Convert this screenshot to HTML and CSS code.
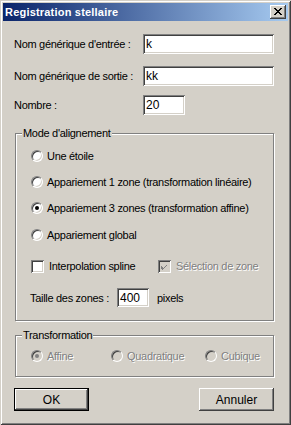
FILE: index.html
```html
<!DOCTYPE html>
<html lang="fr">
<head>
<meta charset="utf-8">
<title>Registration stellaire</title>
<link rel="stylesheet" href="styles.css">
</head>
<body>
<div class="window">
  <div class="titlebar">
    <span class="title">Registration stellaire</span>
    <span class="close-btn"><svg width="8" height="7" viewBox="0 0 8 7"><path d="M0 0h2v1h1v1h2v-1h1v-1h2v1h-1v1h-1v1h-1v1h1v1h1v1h1v1h-2v-1h-1v-1h-2v1h-1v1h-2v-1h1v-1h1v-1h1v-1h-1v-1h-1v-1h-1z" fill="#000"/></svg></span>
  </div>
  <div class="content">
    <div class="field-row row1">
      <span class="label w-main">Nom générique d'entrée :</span>
      <span class="input input-wide">k</span>
    </div>
    <div class="field-row row2">
      <span class="label w-main">Nom générique de sortie :</span>
      <span class="input input-wide">kk</span>
    </div>
    <div class="field-row row3">
      <span class="label w-main">Nombre :</span>
      <span class="input input-num">20</span>
    </div>

    <div class="group group-mode">
      <span class="group-title">Mode d'alignement</span>
      <div class="opt"><span class="radio"></span><span class="opt-text">Une étoile</span></div>
      <div class="opt gap12"><span class="radio"></span><span class="opt-text">Appariement 1 zone (transformation linéaire)</span></div>
      <div class="opt gap12"><span class="radio checked"></span><span class="opt-text">Appariement 3 zones (transformation affine)</span></div>
      <div class="opt gap13"><span class="radio"></span><span class="opt-text">Appariement global</span></div>
      <div class="opt gap17">
        <span class="check-cell"><span class="checkbox"></span><span class="check-text">Interpolation spline</span></span>
        <span class="check-cell"><span class="checkbox disabled"><svg width="7" height="7" viewBox="0 0 7 7"><path d="M6 0v3h-1v1h-1v1h-1v1h-1v1h-1v-1h-1v-3h1v1h1v1h1v-1h1v-1h1v-1h1z" fill="#808080"/></svg></span><span class="check-text disabled-text">Sélection de zone</span></span>
      </div>
      <div class="size-row">
        <span class="label size-label">Taille des zones :</span>
        <span class="input input-size">400</span>
        <span class="label unit">pixels</span>
      </div>
    </div>

    <div class="group group-trans">
      <span class="group-title">Transformation</span>
      <div class="opt trans-row">
        <span class="trans-cell c1"><span class="radio disabled checked"></span><span class="opt-text disabled-text">Affine</span></span>
        <span class="trans-cell c2"><span class="radio disabled"></span><span class="opt-text disabled-text">Quadratique</span></span>
        <span class="trans-cell c3"><span class="radio disabled"></span><span class="opt-text disabled-text">Cubique</span></span>
      </div>
    </div>

    <div class="buttons">
      <span class="btn btn-default">OK</span>
      <span class="btn">Annuler</span>
    </div>
  </div>
</div>
</body>
</html>
```
FILE: styles.css
```css
* { box-sizing: border-box; }
html, body { margin: 0; padding: 0; background: #D4D0C8; }
body {
  font-family: "Liberation Sans", Arial, sans-serif;
  font-size: 11px;
  letter-spacing: -0.3px;
  color: #000;
}
.window {
  width: 291px;
  height: 425px;
  padding: 3px;
  background: #D4D0C8;
  box-shadow: inset 1px 1px #D4D0C8, inset -1px -1px #404040, inset 2px 2px #FFFFFF, inset -2px -2px #808080;
  display: flex;
  flex-direction: column;
}
.titlebar {
  height: 18px;
  background: linear-gradient(to right, #0A246A, #A6CAF0);
  display: flex;
  align-items: center;
  justify-content: space-between;
  padding: 0 2px 0 2px;
}
.title {
  color: #fff;
  font-weight: bold;
  font-size: 11px;
  letter-spacing: 0.2px;
}
.close-btn {
  width: 16px;
  height: 14px;
  background: #D4D0C8;
  box-shadow: inset -1px -1px #404040, inset 1px 1px #FFFFFF, inset -2px -2px #808080, inset 2px 2px #D4D0C8;
  display: flex;
  align-items: center;
  justify-content: center;
  padding-bottom: 1px;
}
.close-btn svg { display: block; }
.content {
  padding: 0 14px 0 11px;
  display: flex;
  flex-direction: column;
}
.field-row {
  display: flex;
  align-items: center;
  height: 20px;
}
.row1 { margin-top: 13px; }
.row2 { margin-top: 12px; }
.row3 { margin-top: 9px; }
.w-main { width: 129px; flex: none; }
.label { white-space: nowrap; }
.input {
  height: 20px;
  background: #fff;
  box-shadow: inset 1px 1px #808080, inset -1px -1px #FFFFFF, inset 2px 2px #404040, inset -2px -2px #D4D0C8;
  padding: 0 3px;
  display: flex;
  align-items: center;
  font-size: 12px;
  letter-spacing: 0;
}
.input-wide { width: 131px; }
.input-num { width: 42px; }

.group {
  position: relative;
  margin-left: 1px;
  width: 259px;
  border: 1px solid #808080;
  box-shadow: inset 1px 1px #FFFFFF, 1px 1px #FFFFFF;
  display: flex;
  flex-direction: column;
  padding-left: 15px;
}
.group-title {
  position: absolute;
  top: -7px;
  left: 6px;
  padding: 0 1px;
  background: #D4D0C8;
  line-height: 13px;
}
.group-mode {
  margin-top: 18px;
  padding-top: 15px;
  padding-bottom: 12px;
  height: 188px;
}
.group-trans {
  margin-top: 14px;
  padding-top: 13px;
  height: 42px;
}
.opt {
  display: flex;
  align-items: center;
  height: 14px;
}
.gap12 { margin-top: 12px; }
.gap13 { margin-top: 13px; }
.gap17 { margin-top: 17px; }
.opt-text { margin-left: 4px; white-space: nowrap; }

.radio {
  position: relative;
  flex: none;
  width: 12px;
  height: 12px;
  border-radius: 50%;
  border: 1px solid;
  border-color: #808080 #FFFFFF #FFFFFF #808080;
  background: #fff;
  box-shadow: inset 1px 1px #404040, inset -1px -1px #D4D0C8;
}
.radio.checked::after {
  content: "";
  position: absolute;
  left: 3px;
  top: 3px;
  width: 4px;
  height: 4px;
  border-radius: 50%;
  background: #000;
}
.radio.disabled { background: #D4D0C8; }
.radio.disabled.checked::after { background: #808080; }

.check-cell { display: flex; align-items: center; }
.check-cell:first-child { width: 127px; }
.checkbox {
  flex: none;
  width: 13px;
  height: 13px;
  background: #fff;
  box-shadow: inset 1px 1px #808080, inset -1px -1px #FFFFFF, inset 2px 2px #404040, inset -2px -2px #D4D0C8;
  display: flex;
  align-items: center;
  justify-content: center;
}
.checkbox.disabled { background: #D4D0C8; }
.checkbox svg { display: block; }
.check-text { margin-left: 5px; white-space: nowrap; }
.disabled-text { color: #808080; text-shadow: 1px 1px #FFFFFF; }

.size-row {
  display: flex;
  align-items: center;
  height: 19px;
  margin-top: 15px;
  margin-left: -1px;
}
.size-label { width: 87px; flex: none; }
.input-size { width: 32px; height: 19px; }
.unit { margin-left: 8px; }

.trans-row { height: 14px; }
.trans-cell { display: flex; align-items: center; }
.c1 { width: 80px; }
.c2 { width: 94px; }

.buttons {
  display: flex;
  justify-content: space-between;
  margin-top: 11px;
}
.btn {
  width: 75px;
  height: 23px;
  background: #D4D0C8;
  box-shadow: inset -1px -1px #404040, inset 1px 1px #FFFFFF, inset -2px -2px #808080, inset 2px 2px #D4D0C8;
  display: flex;
  align-items: center;
  justify-content: center;
  font-size: 12px;
  letter-spacing: 0;
}
.btn-default {
  border: 1px solid #000;
  box-shadow: inset -1px -1px #404040, inset 1px 1px #FFFFFF, inset -2px -2px #808080;
}
```
